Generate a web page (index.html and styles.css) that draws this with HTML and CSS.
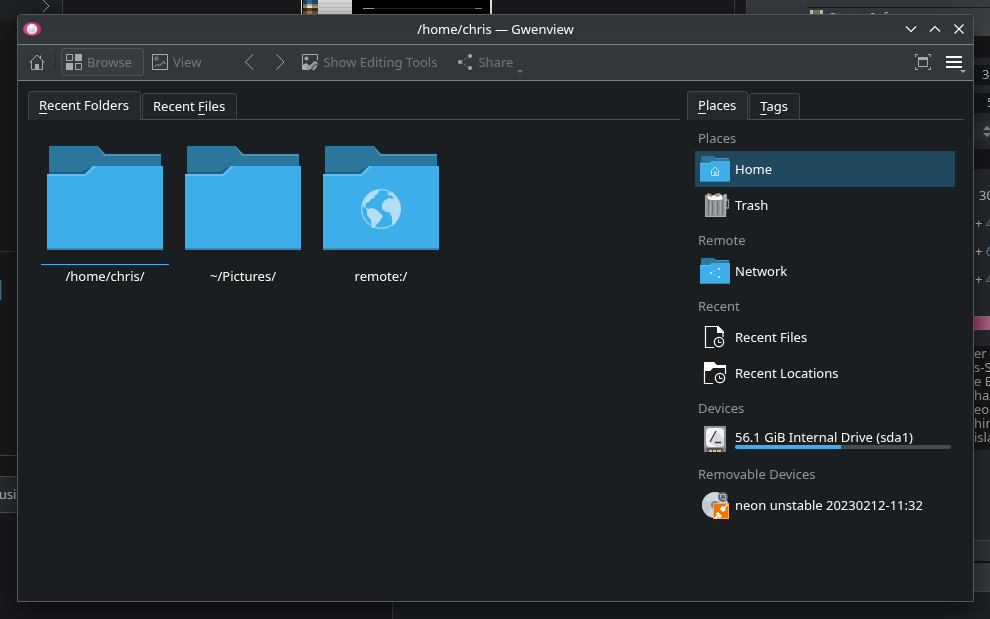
FILE: index.html
```html
<!DOCTYPE html>
<html lang="en">
<head>
<meta charset="utf-8">
<title>/home/chris — Gwenview</title>
<link rel="stylesheet" href="styles.css">
</head>
<body>
<svg class="defs" aria-hidden="true">
  <symbol id="folder" viewBox="0 0 128 128">
    <path fill="#2b769d" d="M8 12h48.500l7.500 8h56v22H8z"/>
    <path fill="#5191b3" d="M56 12h.5l7.500 8h56v2H63z"/>
    <path fill="#225e7e" d="M8 38h32l14-7v12H8z"/>
    <path fill="#3daee9" d="M6 40h38l8-8h70v84H6z"/>
    <path fill="#66bff0" d="M6 40h38l8-8h3l-10 10H6z"/>
    <path fill="#318bba" d="M6 114h116v2H6z"/>
  </symbol>
  <symbol id="folder-small" viewBox="0 0 32 32">
    <path fill="#2b769d" d="M2 3h13l2 2h13v5H2z"/>
    <path fill="#5191b3" d="M16 5h14v1H17z"/>
    <path fill="#3daee9" d="M1 10h10l2-2h18v21H1z"/>
    <path fill="#66bff0" d="M1 10h10l2-2h1l-3 3H1z"/>
    <path fill="#318bba" d="M1 28h30v1H1z"/>
  </symbol>
  <symbol id="clock" viewBox="0 0 12 12">
    <circle cx="6" cy="6" r="4.700" fill="#1b1e20" stroke="#fcfcfc" stroke-width="1.200"/>
    <path d="M5.500 3.500V6.500h3" fill="none" stroke="#fcfcfc"/>
  </symbol>
</svg>

<div class="desktop" aria-hidden="true">
  <div class="bg files">
    <svg class="files-next" viewBox="0 0 10 14"><path d="M2 1l6 6-6 6" fill="none" stroke="#9b9ea0"/></svg>
    <span class="files-select"></span>
    <span class="files-tab">Music</span>
  </div>
  <div class="bg preview"><span class="shots"></span><span class="sheet"></span><span class="player"></span></div>
  <div class="bg lower"></div>
  <div class="bg tool">
    <div class="tool-title"><span class="thumb"></span>Status Info</div>
    <div class="field f1">3</div>
    <div class="field f2">5</div>
    <div class="field f3"><svg viewBox="0 0 10 14"><path fill="#8d9093" d="M1 6l4-4 4 4zM1 9h8l-4 4z"/></svg></div>
    <div class="field f4"></div>
    <div class="sums"><span>30</span><span>+ <b>4</b></span><span>+ <b>6</b></span><span>+ <b>4</b></span></div>
    <div class="meter"></div>
    <div class="log">er<br>s-S<br>e B<br>haz<br>eor<br>hin<br>isla</div>
    <div class="footer-bar"></div>
  </div>
</div>

<main class="window">
  <header class="titlebar">
    <svg class="app-icon" viewBox="0 0 18 14"><ellipse cx="9" cy="7" rx="9" ry="6.800" fill="#d9408c"/><path d="M9 .2a9 6.800 0 0 1 0 13.600z" fill="#c02f76"/><circle cx="9" cy="7" r="5.300" fill="#e7e7ea"/><path d="M5 7l3 2 2-3 3 3a4.500 4.500 0 0 1-8-2" fill="#c8cace"/><circle cx="8" cy="4.500" r="1.500" fill="#fff"/></svg>
    <h1>/home/chris — Gwenview</h1>
    <div class="controls">
      <button aria-label="Minimize"><svg viewBox="0 0 16 16"><path d="M3 5.500l5 5 5-5"/></svg></button>
      <button aria-label="Maximize"><svg viewBox="0 0 16 16"><path d="M3 10.500l5-5 5 5"/></svg></button>
      <button aria-label="Close"><svg viewBox="0 0 16 16"><path d="M3.500 3.500l9 9M12.500 3.500l-9 9"/></svg></button>
    </div>
  </header>

  <nav class="toolbar" aria-label="Main toolbar">
    <button class="tool-btn" aria-label="Home"><svg viewBox="0 0 16 16"><path d="M.5 8.500L8 1l7.500 7.500M2.500 7v8.500h11V7M11.500 1.500v3" fill="none" stroke="#a7a9ac"/><path d="M6 10h4v5.500H6z" fill="#a7a9ac"/></svg></button>
    <span class="divider"></span>
    <button class="tool-btn checked"><svg viewBox="0 0 16 16"><path d="M.5.5h6v6h-6zM9.500 9.500h6v6h-6z" fill="none" stroke="#a7a9ac"/><path d="M9 0h7v7H9zM0 9h7v7H0z" fill="#a7a9ac"/></svg>Browse</button>
    <button class="tool-btn"><svg viewBox="0 0 16 16"><path d="M.5.500h15v15H.5zM2.500 13l3-3 2 2 4-4.500 2 2.500" fill="none" stroke="#a7a9ac"/><circle cx="4.500" cy="4.500" r="1.500" fill="none" stroke="#a7a9ac"/></svg>View</button>
    <div class="history">
      <button class="tool-btn" aria-label="Previous"><svg viewBox="0 0 16 16"><path d="M12 .5L4.500 8l7.500 7.500" fill="none" stroke="#a7a9ac"/></svg></button>
      <button class="tool-btn" aria-label="Next"><svg viewBox="0 0 16 16"><path d="M4.500.5L12 8l-7.500 7.500" fill="none" stroke="#a7a9ac"/></svg></button>
    </div>
    <button class="tool-btn"><svg viewBox="0 0 16 16"><path d="M7 15.500H.5V.5h15V6" fill="none" stroke="#a7a9ac"/><circle cx="4.500" cy="4.500" r="2" fill="#a7a9ac"/><path d="M1 15v-4l3-2 3 2-2 4zM6 13l7-6 3 2-7 6-3 1zM12 13l4-3-2 4-2 2h-2z" fill="#a7a9ac"/><path d="M8 14l6-5M10 14l5-4" stroke="#33373b" stroke-width=".7"/></svg>Show Editing Tools</button>
    <button class="tool-btn share"><svg viewBox="0 0 16 16"><g fill="#a7a9ac"><circle cx="3" cy="8" r="2"/><circle cx="13" cy="2" r="2"/><circle cx="13" cy="14" r="2"/></g><path d="M5 7l6-4M5 9l6 4" stroke="#a7a9ac" stroke-dasharray="1 1.500"/></svg>Share<i class="drop"></i></button>
    <span class="spacer"></span>
    <button class="tool-btn" aria-label="Full screen"><svg viewBox="0 0 16 16"><path d="M.5 3V.5H3M13 .5h2.500V3M15.500 13v2.500H13M3 15.500H.5V13M3.500 4.500h9v8h-9z" fill="none" stroke="#a7a9ac"/><path d="M3 3h10v3H3z" fill="#a7a9ac"/></svg></button>
    <button class="tool-btn menu" aria-label="Open menu"><svg viewBox="0 0 16 16"><path d="M0 2h16v2H0zM0 7h16v2H0zM0 12h16v2H0z" fill="#fcfcfc"/></svg><i class="drop"></i></button>
  </nav>

  <div class="content">
    <section class="pane browser">
      <div class="tabs" role="tablist">
        <button role="tab" aria-selected="true" class="tab active"><span><u>R</u>ecent Folders</span></button>
        <button role="tab" aria-selected="false" class="tab"><span>Recent <u>F</u>iles</span></button>
      </div>
      <div class="folders">
        <a href="#home" class="folder current"><svg viewBox="0 0 128 128"><use href="#folder"/></svg><span>/home/chris/</span></a>
        <a href="#pictures" class="folder"><svg viewBox="0 0 128 128"><use href="#folder"/></svg><span>~/Pictures/</span></a>
        <a href="#remote" class="folder"><svg viewBox="0 0 128 128"><use href="#folder"/>
          <g fill="#b1dff6"><circle cx="64" cy="75" r="19.300" fill="none" stroke="#9dd6f5" stroke-width="1.300"/>
          <path d="M46 69l3-6 5-5 5-2h3l-1 4-4 2 1 2-4 1-2 3-3 1-1 4 3 2 2 3-3-2-4-4z"/>
          <path d="M50 75l5-1 5 2 4 4 2 2-3 5-4 4-2 3h-2l-1-8-4-5z"/>
          <path d="M70 58l3 1 2-1 5 5 3 7 1 6-2 7-4 7-3 2v-9l-3-5h-3l-4-3v-5l3-4 4-2 3 1 2-1-3-3-2 1z"/></g>
        </svg><span>remote:/</span></a>
      </div>
    </section>

    <aside class="pane sidebar">
      <div class="tabs" role="tablist">
        <button role="tab" aria-selected="true" class="tab active"><span><u>P</u>laces</span></button>
        <button role="tab" aria-selected="false" class="tab"><span><u>T</u>ags</span></button>
      </div>
      <div class="places">
        <h2>Places</h2>
        <a href="#home" class="place selected"><svg viewBox="0 0 32 32"><use href="#folder-small"/><path d="M11.500 18.500L16 14l4.500 4.500M12.500 18v4.500h7V18M15.500 22v-3h1.500v3" fill="none" stroke="#bfe4f9"/></svg>Home</a>
        <a href="#trash" class="place"><svg viewBox="0 0 32 32">
          <path d="M7 7l2-3 3 1 2 2 2-2 4-1 3 2 1 3v3H7z" fill="#c49a6c"/>
          <path d="M27 11h2.500v8h-2.500" fill="none" stroke="#8c9296" stroke-width="1.300"/>
          <path d="M6 6h20l1-1v23H6z" fill="#8b9496"/><path d="M25 5h2l1 1-1 22h-1z" fill="#a9b0b2"/>
          <path d="M8 6l4 2 3-2 3 2 4-2 2 4-3 1-3 0-3 0-3 0-3-1z" fill="#f5f5f5"/>
          <path d="M6 7h1v20H6zM11 12h1v14h-1zM16 12h1v14h-1zM21 12h1v14h-1z" fill="#a3abac"/>
          <path d="M9 11h1v15H9zM13 12h1v14h-1zM18 12h1v14h-1zM23 12h1v14h-1z" fill="#697274"/>
          <path d="M6 27h21v1H6z" fill="#aab2b3"/></svg>Trash</a>
        <h2>Remote</h2>
        <a href="#network" class="place"><svg viewBox="0 0 32 32"><use href="#folder-small"/><g fill="#bfe4f9"><path d="M11 17h2v2h-2zM19 13h2v2h-2zM19 21h2v2h-2z"/><path opacity=".6" d="M14 16h1v1h-1zM16 15h1v1h-1zM14 19h1v1h-1zM16 20h1v1h-1z"/></g></svg>Network</a>
        <h2>Recent</h2>
        <a href="#recent-files" class="place"><svg viewBox="0 0 32 32"><path d="M15 26.500H6.500v-21H19l5 5V16" fill="none" stroke="#fcfcfc" stroke-width="1.200"/><path d="M18 5h1l6 6v1h-7z" fill="#fcfcfc"/><use href="#clock" x="14" y="15" width="12" height="12"/></svg>Recent Files</a>
        <a href="#recent-locations" class="place"><svg viewBox="0 0 32 32"><path d="M14 26.500H5.500V12M26.500 8v9" fill="none" stroke="#fcfcfc" stroke-width="1.200"/><path d="M5 5h10l3 3h9v3H14l-3 3H5z" fill="#fcfcfc"/><use href="#clock" x="15" y="15" width="12" height="12"/></svg>Recent Locations</a>
        <h2>Devices</h2>
        <a href="#sda1" class="place"><svg viewBox="0 0 32 32"><path d="M5 3h22v24H5z" fill="#8e979c"/><path d="M5 25h22v4H5z" fill="#4f595d"/><rect x="7" y="5" width="18" height="19" rx="4" fill="#f3f3f3"/><path d="M18 9l7 7v4q0 4-4 4h-3l-7-4z" fill="#d8d9da"/><path d="M11 19l6-11M16 19.500h6" stroke="#31363b" stroke-width="1.300"/><path d="M5 25h3v4H5zM24 25h3v4h-3z" fill="#788388"/><path d="M10 27h3v2h-3zM14 27h3v2h-3zM18 27h4v2h-4z" fill="#fdbc4b"/></svg>
          <span class="drive"><span id="sda1-name">56.1 GiB Internal Drive (sda1)</span><span class="usage" role="meter" aria-labelledby="sda1-name" aria-valuenow="49"><span class="used"></span></span></span></a>
        <h2>Removable Devices</h2>
        <a href="#neon" class="place"><svg viewBox="0 0 32 32"><circle cx="16" cy="16" r="13" fill="#d0d5d8"/><path d="M4 11l10 3-6 12A13 13 0 0 1 4 11" fill="#c3c9cd"/><circle cx="16" cy="16" r="4" fill="#77828d"/><circle cx="16" cy="16" r="2" fill="#dde0e2"/><circle cx="24" cy="8" r="5" fill="#596777"/><path d="M21.500 5.500h5v5h-3l-2-2z" fill="none" stroke="#b4c1cd"/><path d="M14 14h16v16H14z" fill="#f67400"/><path d="M14.500 14.500h15v15h-15z" fill="none" stroke="#ffab60"/><path d="M15 29l3-3-1-2 2-1 4 4-2 2-2-1-2 2zM21 20l2-3 2 1 3-3 1 1-3 3 1 2-3 2z" fill="#fff"/></svg>neon unstable 20230212-11:32</a>
      </div>
    </aside>
  </div>
</main>
</body>
</html>
```

FILE: styles.css
```css
* { box-sizing: border-box; }

body {
  margin: 0;
  min-height: 100vh;
  padding: 14px 16px 17px 17px;
  display: flex;
  overflow: hidden;
  background: #1b1a20;
  color: #fcfcfc;
  font: 13px/18px "Noto Sans", "Liberation Sans", sans-serif;
}

button {
  font: inherit;
  color: inherit;
  background: none;
  border: 0;
  padding: 0;
}

a { color: inherit; text-decoration: none; }
h1, h2 { margin: 0; font: inherit; }
svg { display: block; flex: none; }
u { text-underline-offset: 3px; text-decoration-thickness: 1px; text-decoration-skip-ink: none; }
.defs { position: absolute; width: 0; height: 0; }

/* Windows lying behind the main one */
.desktop { position: fixed; inset: 0; overflow: hidden; }
.bg, .bg > * { position: absolute; }

.files {
  left: 0; top: 0; width: 735px; height: 513px;
  background: linear-gradient(#36393c, #36393c) 0 251px / 18px 1px no-repeat,
    linear-gradient(#46494c, #46494c) 0 455px / 18px 1px no-repeat,
    linear-gradient(#3c4245, #3c4245) 62px 0 / 1px 20px no-repeat,
    linear-gradient(#1d2224, #1d2224) 0 0 / 62px 20px no-repeat, #1a1b1c;
  border-right: 1px solid #3c3f42;
}
.files-next { left: 41px; top: -1px; width: 10px; height: 14px; }
.files-select { left: 0; top: 280px; width: 2px; height: 20px; background: #3f7696; border-right: 1px solid #1d4054; }
.files-tab {
  left: 0; top: 476px; width: 120px; height: 37px;
  border: solid #4b5154; border-width: 1px 0;
  background: #2a2e31; color: #c4c6c7; line-height: 35px; text-indent: -13px;
}

.preview { left: 301px; top: 0; width: 191px; height: 20px; background: #000; border: solid #eee; border-width: 0 2px 0 1px; }
.shots { left: 1px; top: 0; width: 15px; height: 14px; background: linear-gradient(90deg, #0006 4px, #0000 4px 9px, #0005 9px), linear-gradient(#2672a4 0 4px, #d7b58b 4px 6px, #eee 6px 8px, #62482f 8px 11px, #c68339 11px); }
.sheet { left: 16px; top: 0; width: 34px; height: 14px; background: repeating-linear-gradient(#dededf 0 3px, #c7c7c8 3px 4px); }
.player { left: 61px; top: 8px; width: 119px; height: 1px; background: linear-gradient(90deg, #aaa 11px, #252525 11px 112px, #9b8a70 112px); }

.lower { left: 392px; right: 0; top: 520px; bottom: 0; background: #1e2225; border-left: 1px solid #3c4347; }

.tool { right: 0; top: 0; width: 244px; height: 592px; background: #282b30; border-left: 1px solid #45494c; }
.tool-title {
  left: 0; right: 0; top: 0; height: 36px; padding: 8px 0 0 63px;
  display: flex; gap: 6px;
  background: linear-gradient(#18191b, #18191b) 60px 7px / 200px 1px no-repeat, linear-gradient(#373b3f, #42464a);
  color: #cfd0d1;
}
.thumb { width: 13px; height: 10px; margin-top: 2px; background: linear-gradient(90deg, #d5d5c8 3px, #817f4c 3px 10px, #d0d0c4 10px); }
.field { right: 0; width: 30px; height: 20px; padding-left: 22px; background: #16181a; color: #a9c2d2; white-space: nowrap; }
.f1 { top: 65px; }
.f2 { top: 93px; padding-left: 27px; }
.f3 { top: 121px; background: #303438; }
.f3 svg { width: 10px; height: 14px; margin-top: 3px; }
.f4 { top: 149px; }
.tool-title::after { content: ""; position: absolute; right: 0; top: 36px; width: 30px; height: 22px; background: #16181a; }
.sums { left: 228px; top: 181px; display: grid; grid-auto-rows: 28px; line-height: 28px; color: #c6c9cb; white-space: nowrap; }
.sums span:first-child { padding-left: 4px; }
.sums b { font-weight: 400; color: #4b83ad; }
.meter { right: 0; top: 316px; width: 30px; height: 14px; background: linear-gradient(90deg, #8b2355, #b96790); border: solid #7d8083; border-width: 1px 0; }
.log { left: 227px; right: 0; top: 346px; height: 104px; background: #17181a; color: #a9adb0; line-height: 14px; white-space: nowrap; }
.footer-bar { left: 0; right: 0; top: 540px; height: 52px; background: linear-gradient(#33373a 20px, #131517 20px 22px, #383c40 22px); border: solid #4a4e51; border-width: 1px 0; }

/* Main window */
.window {
  position: relative;
  flex: 1;
  min-width: 0;
  display: flex;
  flex-direction: column;
  background: #1b1e20;
  border: 1px solid #53595c;
  border-radius: 4px 4px 0 0;
  box-shadow: 0 10px 30px 2px rgb(0 0 0 / 55%);
}

.titlebar {
  height: 30px;
  padding: 0 5px 1px;
  display: grid;
  grid-template-columns: 1fr auto 1fr;
  align-items: center;
  background: linear-gradient(#30353a, #32373b);
  border-bottom: 1px solid #7d8183;
  border-radius: 3px 3px 0 0;
}
.app-icon { width: 18px; height: 14px; }
.controls { display: flex; justify-content: flex-end; gap: 8px; padding-right: 1px; }
.controls svg { width: 16px; height: 16px; fill: none; stroke: #fcfcfc; stroke-width: 1.2; }

.toolbar {
  height: 36px;
  padding: 0 6px 1px;
  display: flex;
  align-items: center;
  gap: 3px;
  background: linear-gradient(#34393e, #31363a);
  border-bottom: 1px solid #7d8183;
  color: #74777a;
}
.tool-btn {
  position: relative;
  height: 28px;
  padding: 0 4px;
  display: flex;
  align-items: center;
  gap: 5px;
  border: 1px solid transparent;
  border-radius: 3px;
  white-space: nowrap;
}
.tool-btn svg { width: 16px; height: 16px; }
.tool-btn.checked { background: #383c41; border-color: #505458; padding-right: 11px; }
.divider { width: 1px; height: 16px; margin: 0 2px; background: #2a2e32; }
.history { display: flex; gap: 5px; margin: 0 1px 0 27px; }
.share { margin-left: 7px; }
.menu { margin-left: 2px; }
.spacer { flex: 1; }
.drop {
  position: absolute;
  right: -6px;
  bottom: 2px;
  border: solid transparent;
  border-width: 3px 3px 0;
  border-top-color: #74777a;
}
.menu .drop { right: 0; border-top-color: #a7a9ac; }

.content { flex: 1; display: flex; gap: 7px; padding: 10px 9px 10px 10px; }
.browser { flex: 1; min-width: 0; }
.sidebar { flex: 0 0 277px; }

.tabs { height: 29px; display: flex; align-items: flex-end; gap: 1px; border-bottom: 1px solid #4b4e50; }
.tab {
  height: 26px;
  padding: 0 11px 2px 10px;
  border: 1px solid #43474a;
  border-bottom: 0;
  border-radius: 3px 3px 0 0;
  background: #202427;
}
.tab.active { height: 29px; margin-bottom: -1px; background: #25292c; }

.folders { display: flex; flex-wrap: wrap; gap: 10px; padding: 14px 13px; }
.folder { width: 128px; display: flex; flex-direction: column; text-align: center; }
.folder svg { width: 128px; height: 128px; margin-bottom: 2px; }
.folder span { padding-top: 2px; border-top: 1px solid transparent; }
.folder.current span { border-color: #3daee9; }

.places { padding: 1px 9px 0 8px; }
.places h2 { height: 30px; padding-left: 3px; line-height: 34px; color: #949698; }
.place { height: 36px; display: flex; align-items: center; gap: 4px; padding: 0 4px; }
.place svg { width: 32px; height: 32px; }
.place.selected { background: #20485e; }
.drive { flex: 1; line-height: 16px; }
.usage { display: block; height: 4px; border-radius: 2px; background: #494b4d; overflow: hidden; }
.used { display: block; width: 49%; height: 4px; background: #3daee9; }
```
